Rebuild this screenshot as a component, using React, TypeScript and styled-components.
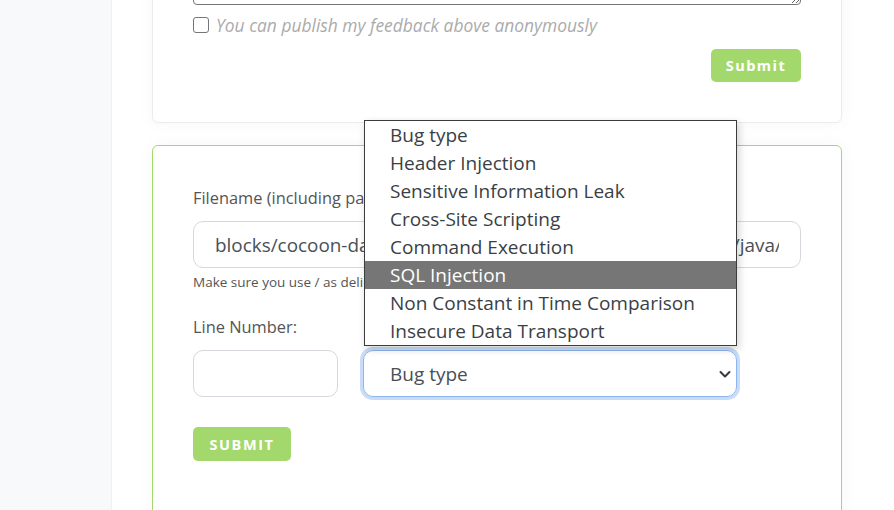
import React from 'react';
import styled, { createGlobalStyle } from 'styled-components';

const GlobalStyle = createGlobalStyle`
  html, body {
    margin: 0;
    padding: 0;
    background: #fff;
    overflow: hidden;
  }
  body {
    font-family: 'Open Sans', 'Noto Sans', sans-serif;
    color: #495057;
  }
`;

const Page = styled.div({
  display: 'flex',
  height: '510px',
  overflow: 'hidden'
});

const Sidebar = styled.aside({
  width: '111px',
  flexShrink: 0,
  background: '#f8f9fa',
  borderRight: '1px solid #eef0f2'
});

const Main = styled.main({
  flex: 1,
  padding: '0 40px',
  display: 'flex',
  flexDirection: 'column',
  gap: '22px',
  // page is scrolled down, the top of the first card is out of view
  marginTop: '-137px'
});

const Card = styled.section<{ accent?: boolean }>((props) => ({
  width: '690px',
  minHeight: props.accent ? '420px' : 'auto',
  boxSizing: 'border-box',
  background: '#fff',
  border: props.accent ? '1px solid #a3d96c' : '1px solid #ebebeb',
  borderRadius: '6px',
  boxShadow: '0 0 18px rgba(0, 0, 0, 0.04)',
  padding: '40px',
  flexShrink: 0
}));

const Textarea = styled.textarea({
  display: 'block',
  width: '100%',
  height: '101px',
  boxSizing: 'border-box',
  border: '1px solid #767676',
  borderRadius: '4px',
  resize: 'vertical'
});

const CheckRow = styled.label({
  display: 'flex',
  alignItems: 'center',
  gap: '7px',
  marginTop: '8px',
  height: '24px',
  fontStyle: 'italic',
  fontSize: '17.4px',
  color: '#ababab'
});

const Checkbox = styled.span({
  width: '16px',
  height: '16px',
  boxSizing: 'border-box',
  border: '1px solid #767676',
  borderRadius: '3px',
  background: '#fff'
});

const ButtonRow = styled.div<{ align?: string; top: number }>((props) => ({
  display: 'flex',
  justifyContent: props.align || 'flex-start',
  marginTop: `${props.top}px`
}));

const GreenButton = styled.button<{ wide?: boolean }>((props) => ({
  background: '#a3d96c',
  color: '#fff',
  border: 'none',
  borderRadius: '5px',
  height: props.wide ? '34px' : '33px',
  width: props.wide ? '98px' : '90px',
  fontFamily: "'Open Sans', 'Noto Sans', sans-serif",
  fontWeight: 700,
  fontSize: '14.5px',
  letterSpacing: props.wide ? '1.6px' : '1.5px',
  padding: 0,
  cursor: 'pointer'
}));

const Label = styled.div({
  fontSize: '16.4px',
  lineHeight: '24px',
  color: '#555',
  marginBottom: '11px',
  whiteSpace: 'nowrap'
});

const TextInput = styled.input<{ w?: string }>((props) => ({
  display: 'block',
  width: props.w || '100%',
  height: '47px',
  boxSizing: 'border-box',
  border: '1px solid #d4d8dd',
  borderRadius: '10px',
  padding: '0 21px',
  fontFamily: "'Open Sans', 'Noto Sans', sans-serif",
  fontSize: '18.9px',
  color: '#495057',
  background: '#fff',
  outline: 'none'
}));

const Help = styled.div({
  fontSize: '13.5px',
  lineHeight: '18px',
  color: '#555',
  marginTop: '5px',
  whiteSpace: 'nowrap'
});

const FieldRow = styled.div({
  display: 'flex',
  gap: '25px',
  marginTop: '24px'
});

const Field = styled.div({
  display: 'flex',
  flexDirection: 'column'
});

const SelectWrap = styled.div({
  position: 'relative',
  width: '374px'
});

const SelectBox = styled.div({
  height: '47px',
  boxSizing: 'border-box',
  border: '1px solid #8bb6f0',
  borderRadius: '10px',
  boxShadow: '0 0 0 3px #c9dcf7',
  display: 'flex',
  alignItems: 'center',
  justifyContent: 'space-between',
  padding: '0 4px 0 26px',
  fontSize: '19px',
  color: '#495057'
});

const Listbox = styled.ul({
  position: 'absolute',
  left: '1px',
  right: 0,
  bottom: 'calc(100% + 4px)',
  margin: 0,
  padding: 0,
  listStyle: 'none',
  background: '#fff',
  border: '1px solid #3c3c3c',
  boxShadow: '2px 3px 8px rgba(0, 0, 0, 0.18)',
  zIndex: 2
});

const Option = styled.li<{ active?: boolean }>((props) => ({
  height: '28px',
  lineHeight: '28px',
  padding: '0 0 0 25px',
  fontSize: '19px',
  whiteSpace: 'nowrap',
  background: props.active ? '#767676' : '#fff',
  color: props.active ? '#fff' : '#3a3f45'
}));

const bugTypes = [
  'Bug type',
  'Header Injection',
  'Sensitive Information Leak',
  'Cross-Site Scripting',
  'Command Execution',
  'SQL Injection',
  'Non Constant in Time Comparison',
  'Insecure Data Transport'
];

function Chevron() {
  return (
    <svg width="14" height="10" viewBox="0 0 14 10">
      <path d="M2.5 3l4.5 4.5 4.5-4.5" fill="none" stroke="#343a40" strokeWidth="2" strokeLinecap="round" strokeLinejoin="round" />
    </svg>
  );
}

export default function App() {
  return (
    <>
      <GlobalStyle />
      <Page>
        <Sidebar />
        <Main>
          <Card>
            <Textarea />
            <CheckRow>
              <Checkbox />
              You can publish my feedback above anonymously
            </CheckRow>
            <ButtonRow align="flex-end" top={12}>
              <GreenButton>Submit</GreenButton>
            </ButtonRow>
          </Card>
          <Card accent>
            <Label>Filename (including path):</Label>
            <TextInput
              readOnly
              value="blocks/cocoon-databases/cocoon-databases-impl/src/main/java/org/apache/cocoon/databases/"
            />
            <Help>Make sure you use / as delimiter for the path</Help>
            <FieldRow>
              <Field>
                <Label>Line Number:</Label>
                <TextInput w="145px" readOnly />
              </Field>
              <Field>
                <Label>Bug Type:</Label>
                <SelectWrap>
                  <Listbox>
                    {bugTypes.map((t) => (
                      <Option key={t} active={t === 'SQL Injection'}>
                        {t}
                      </Option>
                    ))}
                  </Listbox>
                  <SelectBox>
                    <span>Bug type</span>
                    <Chevron />
                  </SelectBox>
                </SelectWrap>
              </Field>
            </FieldRow>
            <ButtonRow top={30}>
              <GreenButton wide>SUBMIT</GreenButton>
            </ButtonRow>
          </Card>
        </Main>
      </Page>
    </>
  );
}
